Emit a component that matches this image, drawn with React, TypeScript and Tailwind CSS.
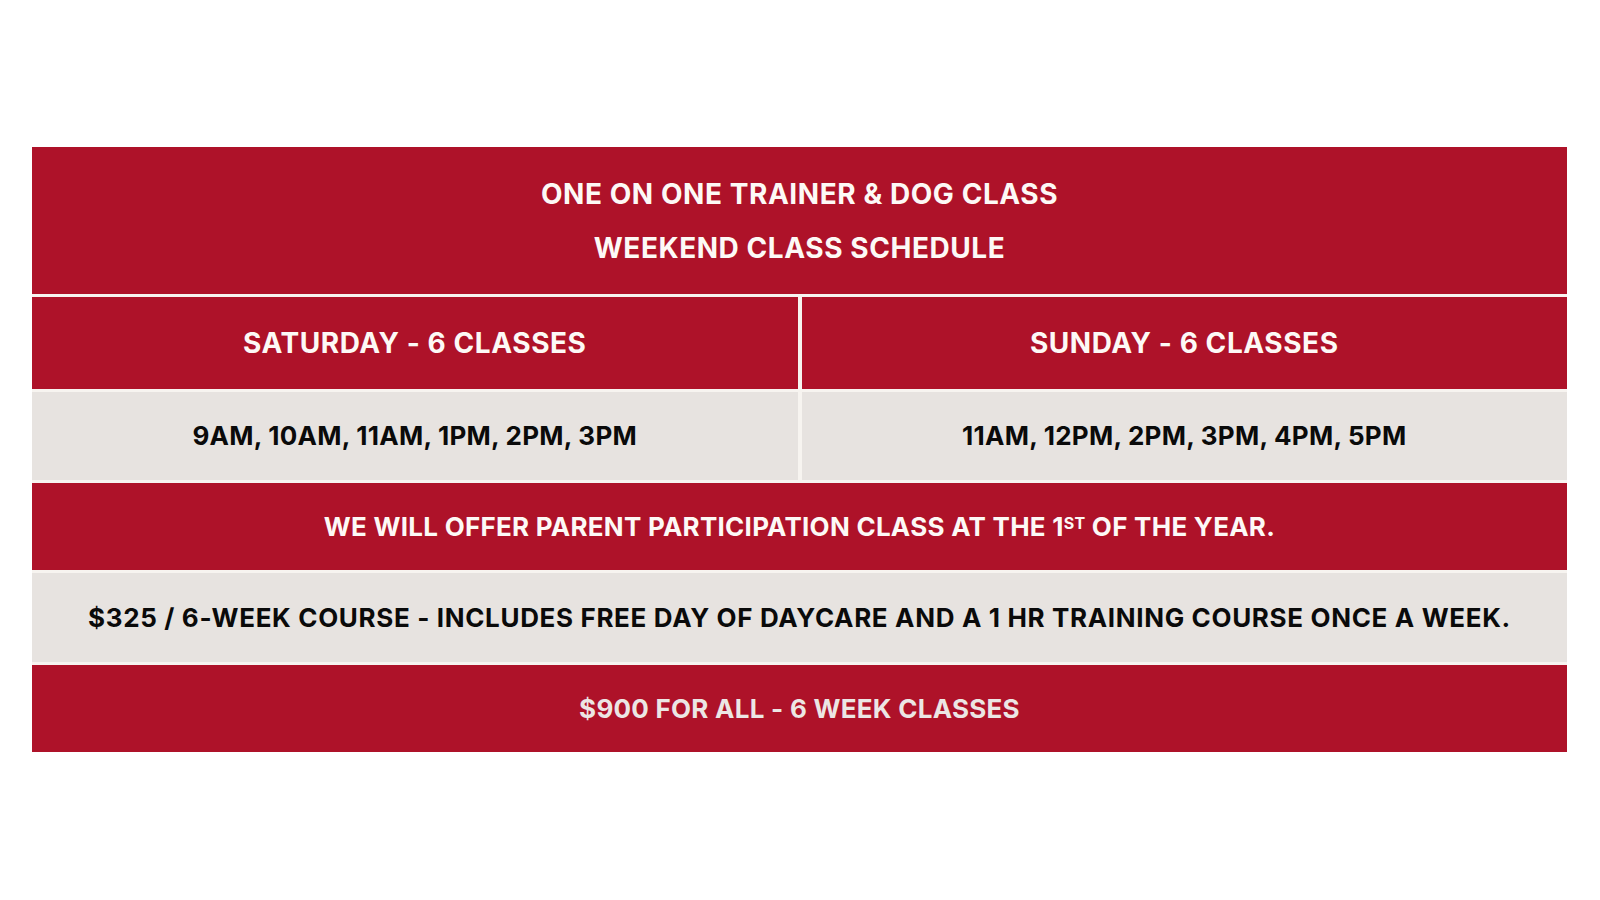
import React from "react";

const red = "bg-[#ae1229] text-[#fdf9f6]";
const grey = "bg-[#e7e3e0] text-[#0a0a0a]";

const Cell = ({ className, children }: { className: string; children: React.ReactNode }) => (
  <div className={`flex items-center justify-center text-center ${className}`}>{children}</div>
);

export default function App() {
  return (
    <div className="min-h-screen bg-white pt-[147px] px-[32px] font-['Inter',sans-serif] font-bold text-[28px] leading-none tracking-[0.02em]">
      <div className="flex flex-col gap-[3px] bg-[#f7f4f0] w-[1535px]">
        <Cell className={`${red} h-[147px] flex-col leading-[54px]`}>
          <div>ONE ON ONE TRAINER &amp; DOG CLASS</div>
          <div>WEEKEND CLASS SCHEDULE</div>
        </Cell>
        <div className="grid grid-cols-2 gap-x-[4px] gap-y-[3px]">
          <Cell className={`${red} h-[92px]`}>SATURDAY - 6 CLASSES</Cell>
          <Cell className={`${red} h-[92px]`}>SUNDAY - 6 CLASSES</Cell>
          <Cell className={`${grey} h-[88px] text-[26px] tracking-[0.01em]`}>9AM, 10AM, 11AM, 1PM, 2PM, 3PM</Cell>
          <Cell className={`${grey} h-[88px] text-[26px] tracking-[0.01em]`}>11AM, 12PM, 2PM, 3PM, 4PM, 5PM</Cell>
        </div>
        <Cell className={`${red} h-[87px] text-[26px] tracking-[0.01em]`}>
          <span>
            WE WILL OFFER PARENT PARTICIPATION CLASS AT THE 1
            <sup className="text-[16px] relative -top-[7px]">ST</sup> OF THE YEAR.
          </span>
        </Cell>
        <Cell className={`${grey} h-[89px] text-[26px] tracking-[0.025em]`}>
          $325 / 6-WEEK COURSE - INCLUDES FREE DAY OF DAYCARE AND A 1 HR TRAINING COURSE ONCE A WEEK.
        </Cell>
        <Cell className={`${red} h-[87px] text-[26px] tracking-[0.01em] !text-[#ece6e4]`}>$900 FOR ALL - 6 WEEK CLASSES</Cell>
      </div>
    </div>
  );
}
